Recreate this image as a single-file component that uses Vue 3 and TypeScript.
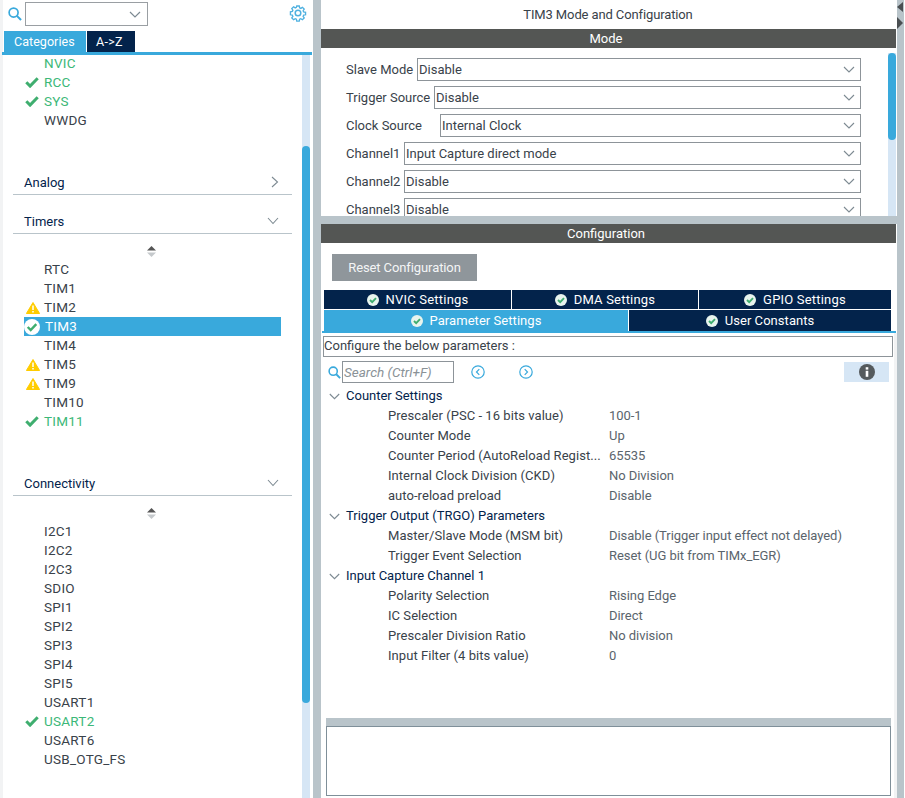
<script setup lang="ts">
interface Row { name: string; state?: 'ok' | 'warn' | 'sel' }
const systemRows: Row[] = [
  { name: 'NVIC', state: undefined }, { name: 'RCC', state: 'ok' }, { name: 'SYS', state: 'ok' }, { name: 'WWDG' },
]
const timerRows: Row[] = [
  { name: 'RTC' }, { name: 'TIM1' }, { name: 'TIM2', state: 'warn' }, { name: 'TIM3', state: 'sel' }, { name: 'TIM4' },
  { name: 'TIM5', state: 'warn' }, { name: 'TIM9', state: 'warn' }, { name: 'TIM10' }, { name: 'TIM11', state: 'ok' },
]
const connRows: Row[] = ['I2C1', 'I2C2', 'I2C3', 'SDIO', 'SPI1', 'SPI2', 'SPI3', 'SPI4', 'SPI5', 'USART1'].map((name) => ({ name }))
connRows.push({ name: 'USART2', state: 'ok' }, { name: 'USART6' }, { name: 'USB_OTG_FS' })

const modes = [
  { label: 'Slave Mode', value: 'Disable', w: 71 },
  { label: 'Trigger Source', value: 'Disable', w: 88 },
  { label: 'Clock Source', value: 'Internal Clock', w: 94 },
  { label: 'Channel1', value: 'Input Capture direct mode', w: 58 },
  { label: 'Channel2', value: 'Disable', w: 58 },
  { label: 'Channel3', value: 'Disable', w: 58 },
]
const tree = [
  { title: 'Counter Settings', items: [
    ['Prescaler (PSC - 16 bits value)', '100-1'], ['Counter Mode', 'Up'],
    ['Counter Period (AutoReload Regist...', '65535'], ['Internal Clock Division (CKD)', 'No Division'],
    ['auto-reload preload', 'Disable'] ] },
  { title: 'Trigger Output (TRGO) Parameters', items: [
    ['Master/Slave Mode (MSM bit)', 'Disable (Trigger input effect not delayed)'],
    ['Trigger Event Selection', 'Reset (UG bit from TIMx_EGR)'] ] },
  { title: 'Input Capture Channel 1', items: [
    ['Polarity Selection', 'Rising Edge'], ['IC Selection', 'Direct'],
    ['Prescaler Division Ratio', 'No division'], ['Input Filter (4 bits value)', '0'] ] },
]
const topTabs = ['NVIC Settings', 'DMA Settings', 'GPIO Settings']
</script>

<template>
  <div class="app">
    <aside class="left">
      <div class="finder">
        <svg class="mag" width="14" height="14" viewBox="0 0 15 15"><circle cx="6" cy="6" r="4.8" fill="none" stroke="#39a9dc" stroke-width="1.8"/><path d="M9.5 9.5 L14 14" stroke="#39a9dc" stroke-width="2.2"/></svg>
        <div class="combo">
          <svg width="12" height="7" viewBox="0 0 12 7"><path d="M1 1l5 5 5-5" fill="none" stroke="#7d8a92" stroke-width="1.2"/></svg>
        </div>
        <svg class="gear" width="18" height="18" viewBox="0 0 18 18"><g fill="none" stroke="#4fb1e0" stroke-width="1.5"><circle cx="9" cy="9" r="2.8"/><path d="M7.6 1.2h2.8l.4 2.1 1.3.6 1.8-1.2 2 2-1.2 1.8.6 1.3 2.1.4v2.8l-2.1.4-.6 1.3 1.2 1.8-2 2-1.8-1.2-1.3.6-.4 2.1H7.6l-.4-2.1-1.3-.6-1.8 1.2-2-2 1.2-1.8-.6-1.3-2.1-.4V7.6l2.1-.4.6-1.3-1.2-1.8 2-2 1.8 1.2 1.3-.6z" transform="translate(.9 .9) scale(.9)"/></g></svg>
      </div>
      <div class="cat-tabs">
        <div class="cat on">Categories</div>
        <div class="cat az">A-&gt;Z</div>
      </div>
      <div class="cat-line"></div>
      <div class="left-body">
        <div class="list">
          <div class="rows first">
            <div v-for="r in systemRows" :key="r.name" class="row" :class="{ green: r.state === 'ok' || r.name === 'NVIC' }">
              <span class="ico">
                <svg v-if="r.state === 'ok'" width="14" height="11" viewBox="0 0 14 11"><path d="M1.3 5.3l3.8 3.8 7.6-7.8" fill="none" stroke="#3fae6f" stroke-width="3"/></svg>
              </span>{{ r.name }}
            </div>
          </div>
          <div class="sect analog"><span>Analog</span><svg width="8" height="12" viewBox="0 0 8 12"><path d="M1 1l5.5 5L1 11" fill="none" stroke="#7d8a92" stroke-width="1.1"/></svg></div>
          <div class="sect timers"><span>Timers</span><svg width="12" height="8" viewBox="0 0 12 8"><path d="M1 1l5 5.5L11 1" fill="none" stroke="#7d8a92" stroke-width="1.1"/></svg></div>
          <div class="sort"><svg width="9" height="11" viewBox="0 0 9 11"><path d="M4.5 0L9 4.5H0z" fill="#555"/><path d="M0 6.5h9L4.5 11z" fill="#c5c9cc"/></svg></div>
          <div class="rows">
            <div v-for="r in timerRows" :key="r.name" class="row" :class="{ green: r.state === 'ok', sel: r.state === 'sel' }">
              <span class="ico">
                <svg v-if="r.state === 'ok'" width="14" height="11" viewBox="0 0 14 11"><path d="M1.3 5.3l3.8 3.8 7.6-7.8" fill="none" stroke="#3fae6f" stroke-width="3"/></svg>
                <svg v-else-if="r.state === 'warn'" class="warn" width="14" height="12" viewBox="0 0 14 12"><path d="M7 .5L13.6 11.5H.4z" fill="#ffcc00" stroke="#ffcc00" stroke-width="1" stroke-linejoin="round"/><path d="M7 3.6v4.4M7 9v1.6" stroke="#fff" stroke-width="1.5"/></svg>
                <svg v-else-if="r.state === 'sel'" class="circ" width="16" height="16" viewBox="0 0 16 16"><circle cx="8" cy="8" r="8" fill="#fff"/><path d="M3.7 8l3 3 5.6-5.8" fill="none" stroke="#3fae6f" stroke-width="2.4"/></svg>
              </span>{{ r.name }}
            </div>
          </div>
          <div class="sect conn"><span>Connectivity</span><svg width="12" height="8" viewBox="0 0 12 8"><path d="M1 1l5 5.5L11 1" fill="none" stroke="#7d8a92" stroke-width="1.1"/></svg></div>
          <div class="sort"><svg width="9" height="11" viewBox="0 0 9 11"><path d="M4.5 0L9 4.5H0z" fill="#555"/><path d="M0 6.5h9L4.5 11z" fill="#c5c9cc"/></svg></div>
          <div class="rows">
            <div v-for="r in connRows" :key="r.name" class="row" :class="{ green: r.state === 'ok' }">
              <span class="ico">
                <svg v-if="r.state === 'ok'" width="14" height="11" viewBox="0 0 14 11"><path d="M1.3 5.3l3.8 3.8 7.6-7.8" fill="none" stroke="#3fae6f" stroke-width="3"/></svg>
              </span>{{ r.name }}
            </div>
          </div>
        </div>
        <div class="track"><div class="thumb left-thumb"></div></div>
      </div>
    </aside>

    <div class="divider"></div>

    <main class="right">
      <div class="title">TIM3 Mode and Configuration</div>
      <div class="bar">Mode</div>
      <div class="mode-body">
        <div class="mode-list">
          <div v-for="m in modes" :key="m.label" class="mode-row">
            <span class="mode-label" :style="{ width: m.w + 'px' }">{{ m.label }}</span>
            <div class="select">
              <span>{{ m.value }}</span>
              <svg width="12" height="7" viewBox="0 0 12 7"><path d="M1 1l5 5 5-5" fill="none" stroke="#7d8a92" stroke-width="1.1"/></svg>
            </div>
          </div>
        </div>
        <div class="track mode-track"><div class="thumb mode-thumb"></div></div>
      </div>
      <div class="splitter"></div>
      <div class="bar">Configuration</div>
      <button class="reset">Reset Configuration</button>
      <div class="tabs">
        <div v-for="t in topTabs" :key="t" class="tab">
          <svg width="12" height="12" viewBox="0 0 12 12"><circle cx="6" cy="6" r="6" fill="#e8f4ee"/><path d="M3 6l2.2 2.2L9 4.2" fill="none" stroke="#3fae6f" stroke-width="1.9"/></svg>{{ t }}
        </div>
      </div>
      <div class="tabs second">
        <div class="tab active">
          <svg width="12" height="12" viewBox="0 0 12 12"><circle cx="6" cy="6" r="6" fill="#e8f4ee"/><path d="M3 6l2.2 2.2L9 4.2" fill="none" stroke="#3fae6f" stroke-width="1.9"/></svg>Parameter Settings
        </div>
        <div class="tab">
          <svg width="12" height="12" viewBox="0 0 12 12"><circle cx="6" cy="6" r="6" fill="#e8f4ee"/><path d="M3 6l2.2 2.2L9 4.2" fill="none" stroke="#3fae6f" stroke-width="1.9"/></svg>User Constants
        </div>
      </div>
      <div class="tab-line"></div>
      <div class="config-body">
        <div class="configure">Configure the below parameters :</div>
        <div class="searchbar">
          <svg width="13" height="13" viewBox="0 0 15 15"><circle cx="6" cy="6" r="4.7" fill="none" stroke="#39a9dc" stroke-width="1.8"/><path d="M9.5 9.5 L14 14" stroke="#39a9dc" stroke-width="2.2"/></svg>
          <div class="search-input">Search (Ctrl+F)</div>
          <svg class="nav" width="14" height="14" viewBox="0 0 14 14"><circle cx="7" cy="7" r="6.2" fill="none" stroke="#39a9dc" stroke-width="1.2"/><path d="M8.3 4.2L5.5 7l2.8 2.8" fill="none" stroke="#39a9dc" stroke-width="1.2"/></svg>
          <svg class="nav next" width="14" height="14" viewBox="0 0 14 14"><circle cx="7" cy="7" r="6.2" fill="none" stroke="#39a9dc" stroke-width="1.2"/><path d="M5.7 4.2L8.5 7l-2.8 2.8" fill="none" stroke="#39a9dc" stroke-width="1.2"/></svg>
          <div class="info">
            <svg width="16" height="16" viewBox="0 0 16 16"><circle cx="8" cy="8" r="8" fill="#555a5d"/><rect x="6.7" y="6.8" width="2.6" height="6" fill="#fff"/><rect x="6.7" y="3.2" width="2.6" height="2.4" fill="#fff"/></svg>
          </div>
        </div>
        <div class="tree">
          <template v-for="g in tree" :key="g.title">
            <div class="tree-head">
              <svg width="11" height="7" viewBox="0 0 11 7"><path d="M.8 1l4.7 4.7L10.2 1" fill="none" stroke="#7d8a92" stroke-width="1.1"/></svg>
              {{ g.title }}
            </div>
            <div v-for="it in g.items" :key="it[0]" class="tree-row">
              <span class="k">{{ it[0] }}</span><span class="v">{{ it[1] }}</span>
            </div>
          </template>
        </div>
        <div class="desc-bar"></div>
        <div class="desc"></div>
      </div>
    </main>

    <div class="gutter">
      <svg width="7" height="30" viewBox="0 0 7 30"><path d="M6 2v10L0 7z" fill="#4a4f52"/><path d="M0 17v12l6-6z" fill="#4a4f52"/></svg>
    </div>
  </div>
</template>

<style>
html, body { margin: 0; padding: 0; background: #fff; }
</style>

<style scoped>
.app {
  display: flex;
  width: 905px;
  height: 798px;
  overflow: hidden;
  font-family: Roboto, "Liberation Sans", sans-serif;
  font-size: 13px;
  color: #39424a;
  background: #fff;
}
.left {
  width: 313px;
  flex: none;
  display: flex;
  flex-direction: column;
  box-sizing: border-box;
  border-left: 3px solid #f2f3f4;
}
.finder {
  height: 31px;
  flex: none;
  display: flex;
  align-items: flex-start;
}
.mag { margin: 7px 0 0 5px; flex: none; }
.combo {
  width: 123px;
  height: 24px;
  margin: 2px 0 0 3px;
  box-sizing: border-box;
  border: 1px solid #9a9fa3;
  display: flex;
  align-items: center;
  justify-content: flex-end;
  padding-right: 6px;
}
.gear { margin: 4px 0 0 141px; flex: none; }
.cat-tabs { height: 21px; display: flex; gap: 1px; flex: none; padding-left: 1px; }
.cat {
  background: #39a9dc;
  color: #fff;
  line-height: 21px;
  width: 82px;
  padding-left: 10px;
  box-sizing: border-box;
  font-size: 12.5px;
  letter-spacing: .05px;
}
.cat.az { background: #03234b; width: 48px; padding-left: 9px; letter-spacing: .3px; }
.cat-line { height: 3px; background: #39a9dc; flex: none; margin: 0 1px 0 -1px; }
.left-body { flex: 1; display: flex; min-height: 0; overflow: hidden; }
.list { width: 299px; flex: none; }
.rows.first { margin-top: -1px; }
.row {
  height: 19px;
  line-height: 19px;
  margin-left: 21px;
  width: 257px;
  display: flex;
  font-size: 13.5px;
  letter-spacing: .25px;
}
.row.green { color: #3cb878; }
.row.sel { background: #39a9dc; color: #fff; }
.row.sel .ico { width: 21px; }
.ico { width: 20px; flex: none; display: flex; align-items: center; padding-left: 1px; box-sizing: border-box; }
.ico .warn { margin-left: 1px; }
.ico .circ { margin-left: -1px; }
.sect {
  height: 25px;
  box-sizing: border-box;
  border-bottom: 1px solid #b9c4ca;
  margin-left: 10px;
  width: 279px;
  padding: 0 13px 0 11px;
  display: flex;
  justify-content: space-between;
  align-items: center;
  color: #03234b;
  font-size: 13px;
}
.analog { margin-top: 40px; }
.timers { margin-top: 14px; }
.conn { margin-top: 40px; }
.sort { height: 26px; padding: 12px 0 0 144px; box-sizing: border-box; line-height: 0; }
.track { width: 8px; flex: none; background: #d6e6f5; }
.thumb { background: #39a9dc; border-radius: 4px; width: 8px; }
.left-thumb { margin-top: 91px; height: 557px; }
.divider {
  width: 8px;
  flex: none;
  background: #b9c4ca;
}
.right {
  width: 576px;
  flex: none;
  display: flex;
  flex-direction: column;
  min-width: 0;
}
.title { height: 29px; line-height: 29px; text-align: center; flex: none; letter-spacing: -.12px; padding-right: 2px; }
.bar { height: 19px; line-height: 19px; background: #545654; color: #fff; text-align: center; flex: none; padding-right: 5px; margin-right: 1px; }
.mode-body { height: 168px; display: flex; flex: none; overflow: hidden; }
.mode-list { width: 567px; flex: none; padding: 10px 0 0 25px; box-sizing: border-box; }
.mode-row { display: flex; align-items: center; height: 22px; margin-bottom: 6px; width: 515px; }
.mode-label { flex: none; white-space: nowrap; }
.select {
  flex: 1;
  height: 23px;
  box-sizing: border-box;
  border: 1px solid #8d9499;
  display: flex;
  align-items: center;
  justify-content: space-between;
  padding: 0 5px 0 1px;
  white-space: nowrap;
}
.mode-track { margin-top: 5px; }
.mode-thumb { height: 87px; }
.splitter { height: 8px; background: #b9c4ca; flex: none; }
.reset {
  width: 145px;
  height: 27px;
  margin: 11px 0 0 11px;
  background: #8f969b;
  color: #f4f5f6;
  border: 0;
  padding: 0;
  font: inherit;
  letter-spacing: -.1px;
  flex: none;
}
.tabs { display: grid; grid-template-columns: 187px 186px 192px; gap: 1px; margin: 9px 0 0 3px; width: 567px; height: 19px; flex: none; }
.tabs.second { margin-top: 1px; height: 21px; grid-template-columns: 304px 262px; }
.tab {
  background: #03234b;
  color: #fff;
  display: flex;
  align-items: center;
  justify-content: center;
  gap: 7px;
  letter-spacing: .2px;
}
.second .tab { letter-spacing: .05px; }
.second .tab.active { background: #39a9dc; }
.tab-line { height: 2px; background: #39a9dc; margin: 0 1px 0 1px; flex: none; }
.config-body { flex: 1; min-height: 0; border-right: 3px solid #f2f3f4; }
.configure {
  margin: 3px 0 0 2px;
  width: 570px;
  height: 21px;
  line-height: 18px;
  box-sizing: border-box;
  border: 1px solid #8d9499;
}
.searchbar { display: flex; align-items: center; height: 24px; margin-top: 3px; padding-left: 7px; }
.search-input {
  width: 112px;
  height: 22px;
  margin-left: 1px;
  box-sizing: border-box;
  border: 1px solid #8d9499;
  font-style: italic;
  color: #8a9297;
  line-height: 20px;
  padding-left: 1px;
  font-size: 13.5px;
}
.nav { margin-left: 17px; }
.nav.next { margin-left: 34px; }
.info {
  width: 45px;
  height: 20px;
  margin-left: 311px;
  background: #d6e6f5;
  display: flex;
  align-items: center;
  justify-content: center;
}
.tree { height: 332px; margin-top: 2px; padding-left: 8px; overflow: hidden; }
.tree-head { height: 20px; line-height: 20px; color: #03234b; display: flex; align-items: center; gap: 6px; }
.tree-row { height: 20px; line-height: 20px; display: flex; padding-left: 59px; letter-spacing: .05px; }
.k { width: 221px; flex: none; white-space: nowrap; }
.v { color: #5a646c; white-space: nowrap; letter-spacing: -.05px; }
.desc-bar { height: 8px; background: #b9c4ca; margin: 0 3px 0 5px; }
.desc { height: 70px; box-sizing: border-box; border: 1px solid #7f8f99; margin: 0 3px 0 5px; }
.gutter { width: 7px; flex: none; background: #b9c4ca; line-height: 0; margin-right: 1px; }
</style>
